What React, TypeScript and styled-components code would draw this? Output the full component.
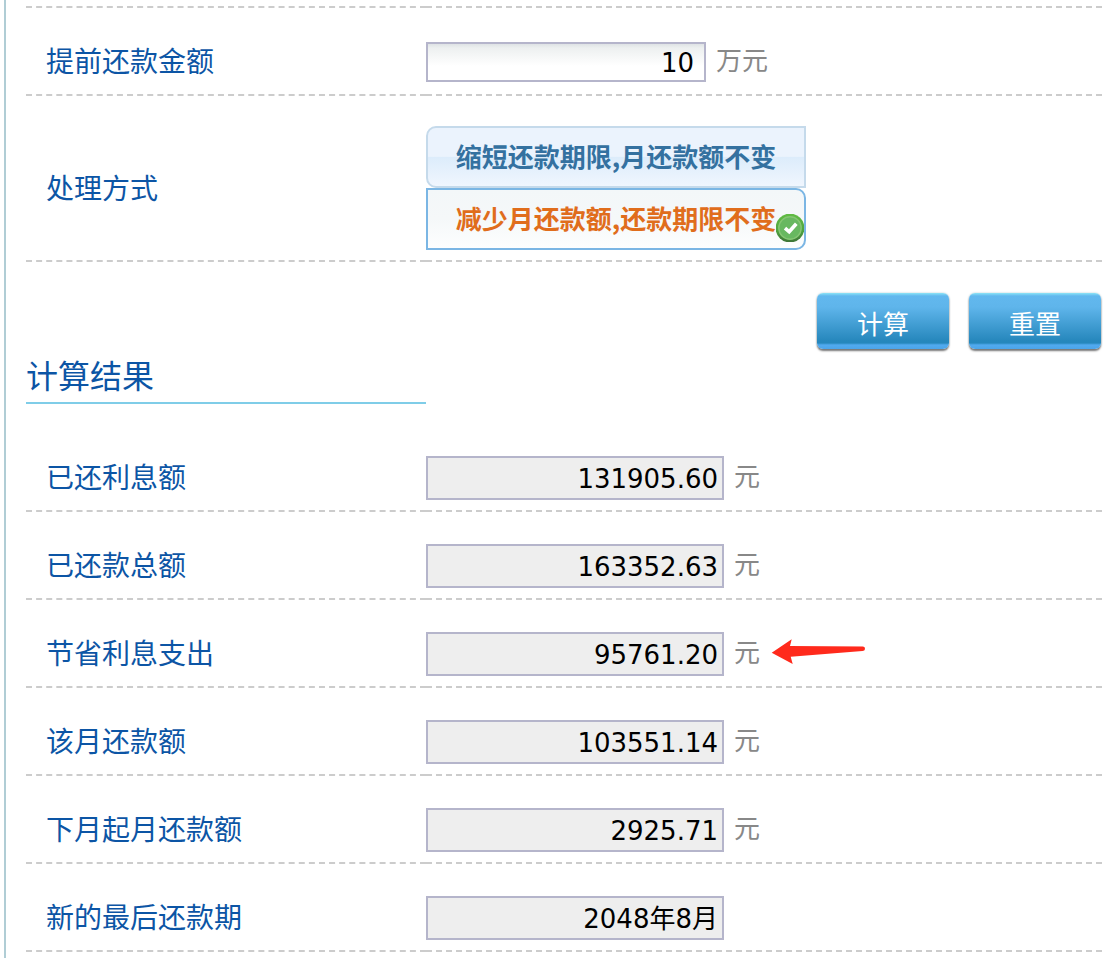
import React, { useState } from "react";
import styled, { createGlobalStyle } from "styled-components";

const GlobalStyle = createGlobalStyle`
  *, *::before, *::after { box-sizing: border-box; }
  body {
    margin: 0;
    background: #fff;
    font-family: "Noto Sans CJK SC", sans-serif;
    font-size: 26px;
    line-height: 40px;
  }
  button, input { font: inherit; margin: 0; }
`;

const Page = styled.main`
  margin-left: 4px;
  padding: 0 12px 6px 20px;
  border-left: 2px solid #b0cdd5;
`;

const RowGrid = styled.div`
  display: grid;
  grid-template-columns: 400px 1fr;
`;

const Cell = styled.div`
  display: flex;
  align-items: center;
  border-bottom: 2px dashed #ccc;
`;

const LabelCell = styled(Cell)`
  padding: 18px 0 0 20px;
  color: #0c55a5;
  font-size: 28px;
`;

const ValueCell = styled(Cell)`
  padding-top: 22px;
`;

const Row = styled(RowGrid)`
  min-height: 88px;
`;

const TallRow = styled(RowGrid)`
  min-height: 166px;

  ${ValueCell} {
    padding-top: 20px;
  }
`;

const RowEnd = styled(RowGrid)`
  height: 8px;
`;

const Field = styled.input`
  width: 280px;
  height: 40px;
  padding: 2px 10px 0;
  border: 2px solid #b5b5cb;
  border-radius: 0;
  outline: none;
  background: linear-gradient(#dfe3e5 0, #edf0f0 4px, #fff 22px);
  color: #000;
  font-family: "DejaVu Sans", "Noto Sans CJK SC", sans-serif;
  font-size: 26px;
  line-height: 32px;
  text-align: right;
`;

const ResultField = styled(Field)<{ $date?: boolean }>`
  width: 298px;
  height: 44px;
  padding: ${(p) => (p.$date ? "0 4px 4px" : "2px 4px 0")};
  background: #eee;
`;

const Unit = styled.span`
  margin-left: 10px;
  padding-bottom: 6px;
  color: #888;
  line-height: 32px;
`;

const Options = styled.div`
  width: 380px;
`;

const Option = styled.label<{ $active: boolean }>`
  position: relative;
  display: flex;
  align-items: center;
  justify-content: center;
  height: 62px;
  padding-bottom: 2px;
  font-weight: 700;
  white-space: nowrap;
  cursor: pointer;
  border: 2px solid ${(p) => (p.$active ? "#7bb6e4" : "#c5daeb")};
  color: ${(p) => (p.$active ? "#e06d1c" : "#3471a0")};
  background: ${(p) =>
    p.$active
      ? "linear-gradient(#f3f7f9, #f5f8f9 50%, #fdfefe)"
      : "linear-gradient(#ebf3fd 0 49%, #dcecfb 50%, #f0f6fe)"};

  &:first-child {
    border-radius: 10px 0 0 10px;
  }
  &:last-child {
    border-radius: 0 10px 10px 0;
  }
`;

const Radio = styled.input`
  position: absolute;
  inset: 0;
  opacity: 0;
  cursor: pointer;
`;

const Badge = styled.svg`
  position: absolute;
  right: 0;
  bottom: 6px;
`;

const Actions = styled.div`
  display: flex;
  justify-content: flex-end;
  gap: 20px;
  padding: 31px 1px 0 0;
`;

const ActionButton = styled.button`
  width: 132px;
  height: 56px;
  padding: 4px 0 0;
  border: 0;
  border-radius: 6px;
  color: #fff;
  line-height: 40px;
  cursor: pointer;
  background: linear-gradient(
    #8ce4f7 0,
    #62b8ee 3px,
    #5fb5eb 14px,
    #2687bc 48px,
    #2687bc 50px,
    #51aaf0 52px,
    #4ca5ea 100%
  );
  box-shadow: 0 2px 2px #777, 0 0 2px #a9c4ce;
`;

const Heading = styled.h2`
  width: 400px;
  margin: 5px 0 20px;
  padding-bottom: 8px;
  border-bottom: 2px solid #7fcde8;
  color: #0c55a5;
  font-size: 32px;
  font-weight: 400;
  line-height: 40px;
`;

const Arrow = styled.svg`
  margin: 0 0 4px 11px;
`;

const CheckBadge = () => (
  <Badge width="28" height="28" viewBox="0 0 28 28" aria-hidden="true">
    <defs>
      <linearGradient id="ring" x1="0" y1="0" x2="0" y2="1">
        <stop offset="0" stopColor="#61bd43" />
        <stop offset="0.6" stopColor="#4fa340" />
        <stop offset="1" stopColor="#3d7337" />
      </linearGradient>
    </defs>
    <circle cx="14" cy="14" r="14.4" fill="url(#ring)" />
    <circle cx="14" cy="14" r="11.2" fill="#68b860" stroke="#85c673" strokeWidth="1.4" />
    <path d="M9 14.2 L13.2 17.8 L20.3 9.8" fill="none" stroke="#fff" strokeWidth="3.6" />
  </Badge>
);

const RedArrow = () => (
  <Arrow width="96" height="28" viewBox="0 0 96 28" aria-hidden="true">
    <path
      d="M0.7 14.7 L20.7 1.3 L19 8 L92 8.6 Q94.3 9 94 11 Q93.8 12.8 91.5 13 L19.7 18.7 L21.7 26 Z"
      fill="#ff2a1c"
    />
  </Arrow>
);

const modes = ["缩短还款期限,月还款额不变", "减少月还款额,还款期限不变"];

const results = [
  { id: "paid-interest", label: "已还利息额", value: "131905.60", unit: "元" },
  { id: "paid-total", label: "已还款总额", value: "163352.63", unit: "元" },
  { id: "saved-interest", label: "节省利息支出", value: "95761.20", unit: "元", marked: true },
  { id: "this-month", label: "该月还款额", value: "103551.14", unit: "元" },
  { id: "next-month", label: "下月起月还款额", value: "2925.71", unit: "元" },
  { id: "last-term", label: "新的最后还款期", value: "2048年8月", date: true },
];

export default function App() {
  const [mode, setMode] = useState(1);
  const [amount, setAmount] = useState("10");

  return (
    <>
      <GlobalStyle />
      <Page>
        <RowEnd>
          <Cell />
          <Cell />
        </RowEnd>
        <Row>
          <LabelCell>
            <label htmlFor="amount">提前还款金额</label>
          </LabelCell>
          <ValueCell>
            <Field id="amount" value={amount} onChange={(e) => setAmount(e.target.value)} />
            <Unit>万元</Unit>
          </ValueCell>
        </Row>
        <TallRow>
          <LabelCell id="mode-label">处理方式</LabelCell>
          <ValueCell>
            <Options role="radiogroup" aria-labelledby="mode-label">
              {modes.map((text, i) => (
                <Option key={text} $active={mode === i}>
                  <Radio type="radio" name="mode" checked={mode === i} onChange={() => setMode(i)} />
                  {text}
                  {mode === i && <CheckBadge />}
                </Option>
              ))}
            </Options>
          </ValueCell>
        </TallRow>
        <Actions>
          <ActionButton type="button">计算</ActionButton>
          <ActionButton type="button" onClick={() => setAmount("")}>
            重置
          </ActionButton>
        </Actions>
        <Heading>计算结果</Heading>
        {results.map((r) => (
          <Row key={r.id}>
            <LabelCell>
              <label htmlFor={r.id}>{r.label}</label>
            </LabelCell>
            <ValueCell>
              <ResultField id={r.id} $date={r.date} readOnly value={r.value} />
              {r.unit && <Unit>{r.unit}</Unit>}
              {r.marked && <RedArrow />}
            </ValueCell>
          </Row>
        ))}
      </Page>
    </>
  );
}
